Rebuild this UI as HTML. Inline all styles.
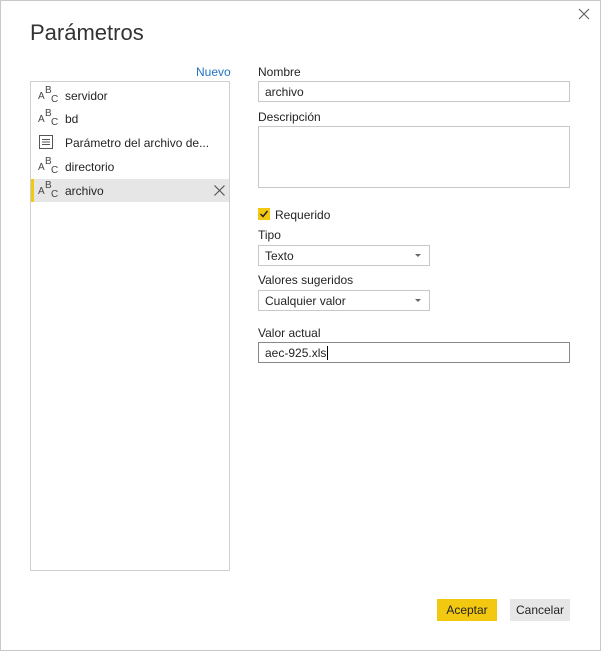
<!DOCTYPE html>
<html><head><meta charset="utf-8"><style>
*{box-sizing:border-box;margin:0;padding:0}
body{width:601px;height:651px;background:#fff;font-family:"Segoe UI","Liberation Sans",sans-serif;font-size:12px;color:#252423;position:relative;overflow:hidden}
.frame{position:absolute;left:0;top:0;width:601px;height:651px;border:1px solid #c8c8c8}
.a{position:absolute}
.title{left:30px;top:20px;font-size:22px;color:#333;font-weight:300}
.list{left:30px;top:81px;width:200px;height:490px;border:1px solid #d0d0d0}
.item{position:absolute;left:0;width:198px;height:23px;line-height:24px}
.item .t{position:absolute;left:34px;font-size:12px}
.abc{position:absolute;left:7px;top:0;width:20px;height:23px;font-size:10px;color:#444}
.abc b{position:absolute;font-weight:normal;line-height:10px}
.sel{background:#e6e6e6}
.sel:before{content:"";position:absolute;left:0;top:0;width:3px;height:23px;background:#f2c811}
.lbl{font-size:12px;color:#252423}
.inp{border:1px solid #c8c8c8;background:#fff;padding-left:6px;font-size:12px;line-height:20px}
.arr{position:absolute;right:8px;top:8px;width:0;height:0;border-left:3px solid transparent;border-right:3px solid transparent;border-top:3px solid #666}
.btn{top:599px;width:60px;height:22px;line-height:22px;text-align:center;font-size:12px}
</style></head><body>
<div class="frame"></div>
<svg class="a" style="left:578px;top:8px" width="12" height="12"><path d="M1 1L11 11M11 1L1 11" stroke="#666" stroke-width="1.2"/></svg>
<div class="a title">Parámetros</div>
<div class="a" style="left:196px;top:65px;color:#1e73c8;font-size:12px">Nuevo</div>
<div class="a list">
 <div class="item" style="top:2px"><div class="abc"><b style="left:0;top:8px">A</b><b style="left:7px;top:2px">B</b><b style="left:13px;top:11px">C</b></div><span class="t">servidor</span></div>
 <div class="item" style="top:25px"><div class="abc"><b style="left:0;top:8px">A</b><b style="left:7px;top:2px">B</b><b style="left:13px;top:11px">C</b></div><span class="t">bd</span></div>
 <div class="item" style="top:49px"><svg class="a" style="left:8px;top:4px" width="14" height="14"><rect x="0.5" y="0.5" width="13" height="13" fill="none" stroke="#555"/><path d="M3 4.5H11M3 7H11M3 9.5H11" stroke="#555"/></svg><span class="t">Parámetro del archivo de...</span></div>
 <div class="item" style="top:73px"><div class="abc"><b style="left:0;top:8px">A</b><b style="left:7px;top:2px">B</b><b style="left:13px;top:11px">C</b></div><span class="t">directorio</span></div>
 <div class="item sel" style="top:97px"><div class="abc"><b style="left:0;top:8px">A</b><b style="left:7px;top:2px">B</b><b style="left:13px;top:11px">C</b></div><span class="t">archivo</span><svg class="a" style="left:183px;top:6px" width="11" height="11"><path d="M0.5 0.5L10.5 10.5M10.5 0.5L0.5 10.5" stroke="#555" stroke-width="1.2"/></svg></div>
</div>
<div class="a lbl" style="left:258px;top:65px">Nombre</div>
<div class="a inp" style="left:258px;top:81px;width:312px;height:21px">archivo</div>
<div class="a lbl" style="left:258px;top:110px">Descripción</div>
<div class="a inp" style="left:258px;top:126px;width:312px;height:62px"></div>
<div class="a" style="left:258px;top:208px;width:12px;height:12px;background:#f2c811"><svg width="12" height="12"><path d="M2.5 6L5 8.5L9.5 3" stroke="#252423" stroke-width="1.5" fill="none"/></svg></div>
<div class="a lbl" style="left:275px;top:208px">Requerido</div>
<div class="a lbl" style="left:258px;top:228px">Tipo</div>
<div class="a inp" style="left:258px;top:245px;width:172px;height:21px">Texto<span class="arr"></span></div>
<div class="a lbl" style="left:258px;top:273px">Valores sugeridos</div>
<div class="a inp" style="left:258px;top:290px;width:172px;height:21px">Cualquier valor<span class="arr"></span></div>
<div class="a lbl" style="left:258px;top:326px">Valor actual</div>
<div class="a inp" style="left:258px;top:342px;width:312px;height:21px;border-color:#888">aec-925.xls<span style="border-left:1px solid #000;margin-left:1px"></span></div>
<div class="a btn" style="left:437px;background:#f2c811">Aceptar</div>
<div class="a btn" style="left:510px;background:#e6e6e6">Cancelar</div>
</body></html>
